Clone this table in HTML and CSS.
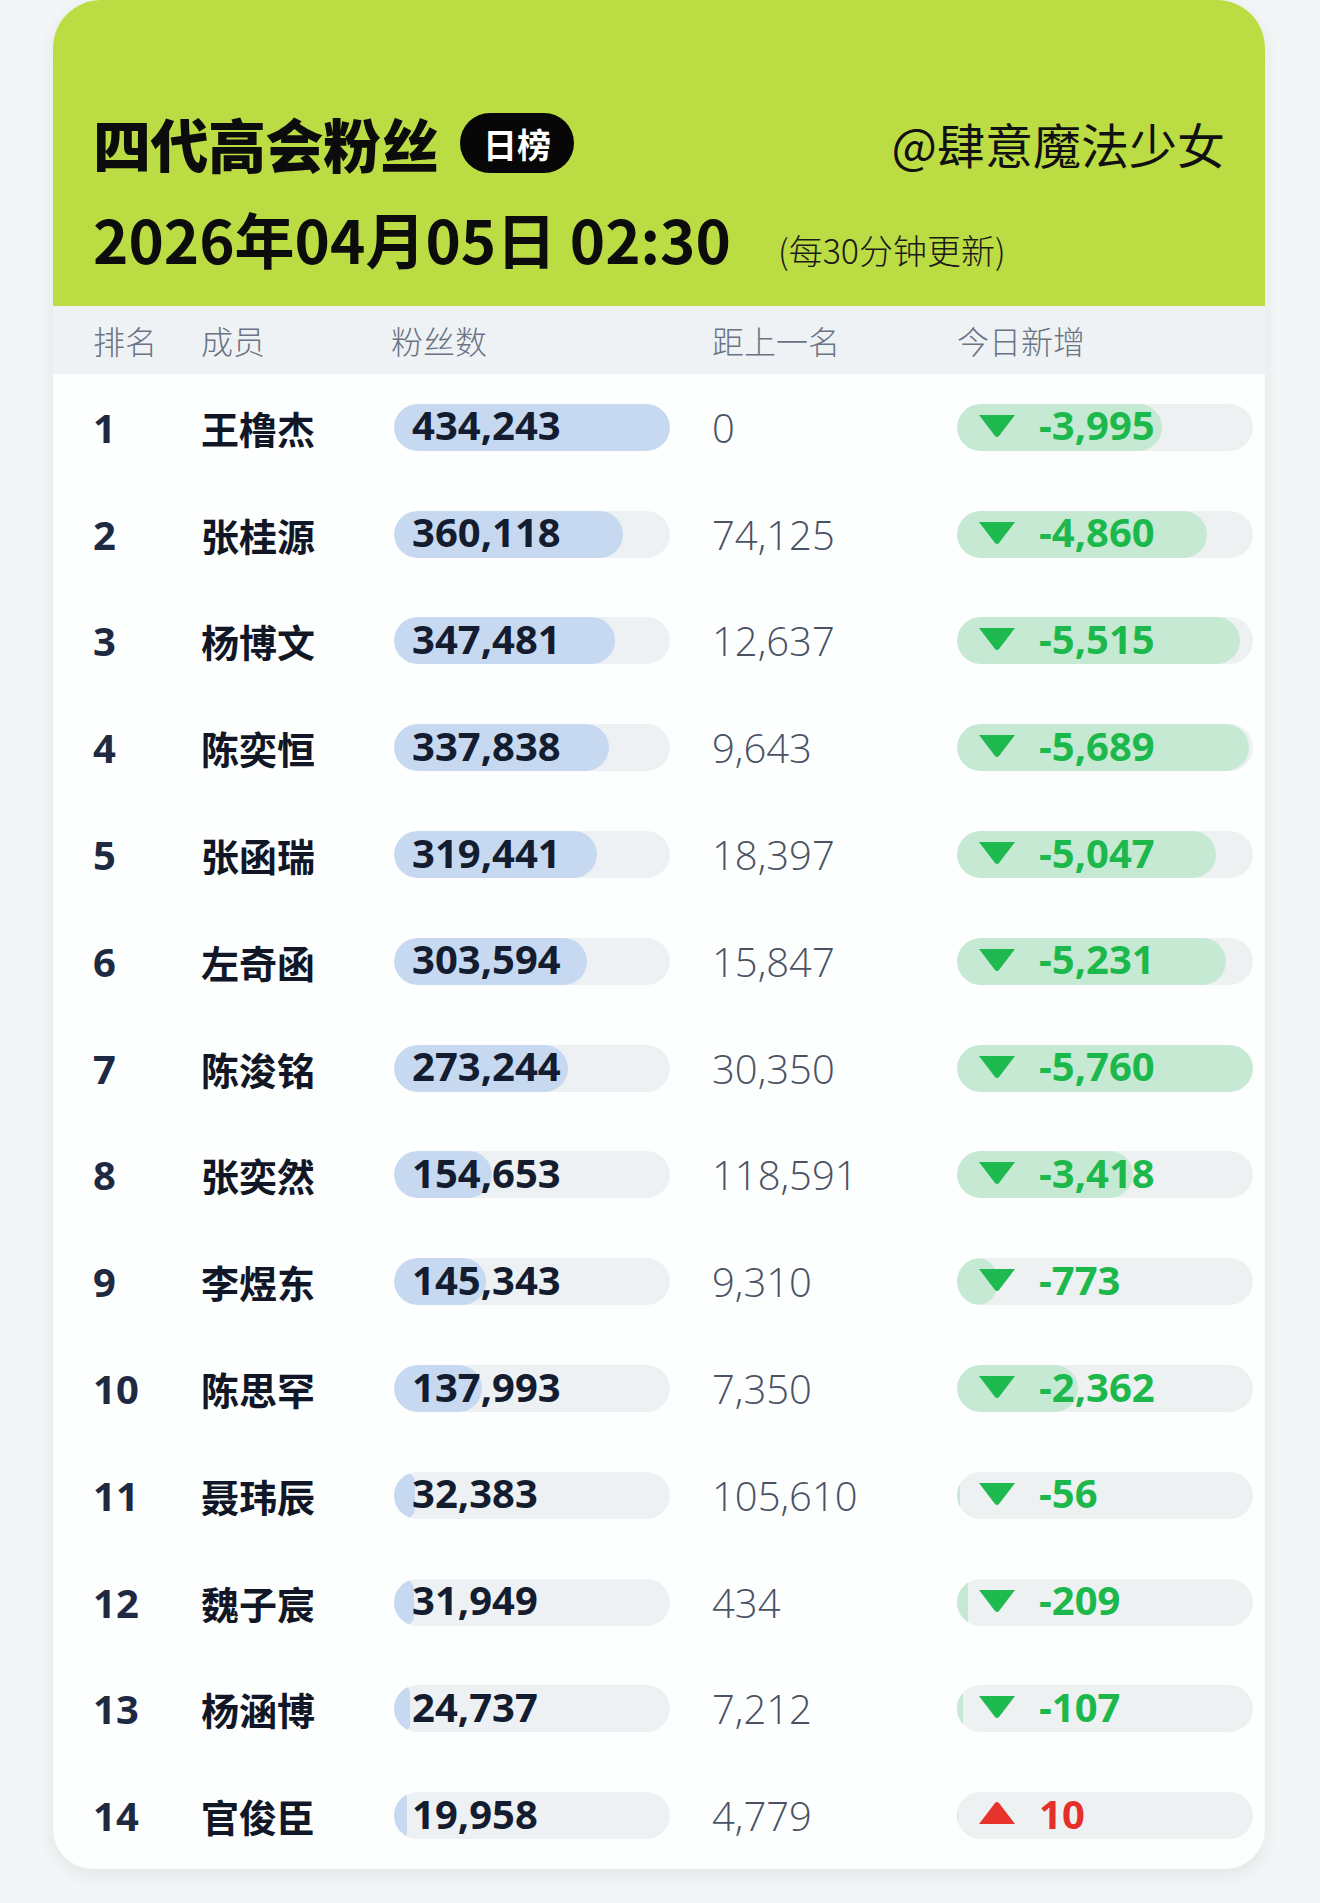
FILE: index.html
```html
<!DOCTYPE html>
<html lang="zh-CN">
<head>
<meta charset="utf-8">
<title>四代高会粉丝 日榜</title>
<link rel="stylesheet" href="styles.css">
</head>
<body>
<div class="card">
  <header class="head">
    <div class="title-row">
      <h1 class="title">四代高会粉丝</h1>
      <span class="badge">日榜</span>
      <span class="handle">@肆意魔法少女</span>
    </div>
    <div class="date-row">
      <span class="date">2026年04月05日 02:30</span>
      <span class="note">(每30分钟更新)</span>
    </div>
  </header>
  <div class="cols">
    <span>排名</span><span>成员</span><span>粉丝数</span><span>距上一名</span><span>今日新增</span>
  </div>
  <div class="rows">
    <div class="row"><span class="rank">1</span><span class="name">王橹杰</span><div class="bar"><div class="track"><div class="fill" style="width:100%"></div></div><span class="val">434,243</span></div><span class="gap">0</span><div class="delta"><div class="track dtrack"><div class="dfill" style="width:69.36%"></div></div><svg class="tri" viewBox="0 0 42 25"><path d="M3 2 H39 L23 23 Q21 25 19 23 Z" fill="#1fba4f"/></svg><span class="dval">-3,995</span></div></div>
    <div class="row"><span class="rank">2</span><span class="name">张桂源</span><div class="bar"><div class="track"><div class="fill" style="width:82.93%"></div></div><span class="val">360,118</span></div><span class="gap">74,125</span><div class="delta"><div class="track dtrack"><div class="dfill" style="width:84.38%"></div></div><svg class="tri" viewBox="0 0 42 25"><path d="M3 2 H39 L23 23 Q21 25 19 23 Z" fill="#1fba4f"/></svg><span class="dval">-4,860</span></div></div>
    <div class="row"><span class="rank">3</span><span class="name">杨博文</span><div class="bar"><div class="track"><div class="fill" style="width:80.02%"></div></div><span class="val">347,481</span></div><span class="gap">12,637</span><div class="delta"><div class="track dtrack"><div class="dfill" style="width:95.75%"></div></div><svg class="tri" viewBox="0 0 42 25"><path d="M3 2 H39 L23 23 Q21 25 19 23 Z" fill="#1fba4f"/></svg><span class="dval">-5,515</span></div></div>
    <div class="row"><span class="rank">4</span><span class="name">陈奕恒</span><div class="bar"><div class="track"><div class="fill" style="width:77.80%"></div></div><span class="val">337,838</span></div><span class="gap">9,643</span><div class="delta"><div class="track dtrack"><div class="dfill" style="width:98.77%"></div></div><svg class="tri" viewBox="0 0 42 25"><path d="M3 2 H39 L23 23 Q21 25 19 23 Z" fill="#1fba4f"/></svg><span class="dval">-5,689</span></div></div>
    <div class="row"><span class="rank">5</span><span class="name">张函瑞</span><div class="bar"><div class="track"><div class="fill" style="width:73.56%"></div></div><span class="val">319,441</span></div><span class="gap">18,397</span><div class="delta"><div class="track dtrack"><div class="dfill" style="width:87.62%"></div></div><svg class="tri" viewBox="0 0 42 25"><path d="M3 2 H39 L23 23 Q21 25 19 23 Z" fill="#1fba4f"/></svg><span class="dval">-5,047</span></div></div>
    <div class="row"><span class="rank">6</span><span class="name">左奇函</span><div class="bar"><div class="track"><div class="fill" style="width:69.91%"></div></div><span class="val">303,594</span></div><span class="gap">15,847</span><div class="delta"><div class="track dtrack"><div class="dfill" style="width:90.82%"></div></div><svg class="tri" viewBox="0 0 42 25"><path d="M3 2 H39 L23 23 Q21 25 19 23 Z" fill="#1fba4f"/></svg><span class="dval">-5,231</span></div></div>
    <div class="row"><span class="rank">7</span><span class="name">陈浚铭</span><div class="bar"><div class="track"><div class="fill" style="width:62.92%"></div></div><span class="val">273,244</span></div><span class="gap">30,350</span><div class="delta"><div class="track dtrack"><div class="dfill" style="width:100%"></div></div><svg class="tri" viewBox="0 0 42 25"><path d="M3 2 H39 L23 23 Q21 25 19 23 Z" fill="#1fba4f"/></svg><span class="dval">-5,760</span></div></div>
    <div class="row"><span class="rank">8</span><span class="name">张奕然</span><div class="bar"><div class="track"><div class="fill" style="width:35.61%"></div></div><span class="val">154,653</span></div><span class="gap">118,591</span><div class="delta"><div class="track dtrack"><div class="dfill" style="width:59.34%"></div></div><svg class="tri" viewBox="0 0 42 25"><path d="M3 2 H39 L23 23 Q21 25 19 23 Z" fill="#1fba4f"/></svg><span class="dval">-3,418</span></div></div>
    <div class="row"><span class="rank">9</span><span class="name">李煜东</span><div class="bar"><div class="track"><div class="fill" style="width:33.47%"></div></div><span class="val">145,343</span></div><span class="gap">9,310</span><div class="delta"><div class="track dtrack"><div class="dfill" style="width:13.42%"></div></div><svg class="tri" viewBox="0 0 42 25"><path d="M3 2 H39 L23 23 Q21 25 19 23 Z" fill="#1fba4f"/></svg><span class="dval">-773</span></div></div>
    <div class="row"><span class="rank">10</span><span class="name">陈思罕</span><div class="bar"><div class="track"><div class="fill" style="width:31.78%"></div></div><span class="val">137,993</span></div><span class="gap">7,350</span><div class="delta"><div class="track dtrack"><div class="dfill" style="width:41.01%"></div></div><svg class="tri" viewBox="0 0 42 25"><path d="M3 2 H39 L23 23 Q21 25 19 23 Z" fill="#1fba4f"/></svg><span class="dval">-2,362</span></div></div>
    <div class="row"><span class="rank">11</span><span class="name">聂玮辰</span><div class="bar"><div class="track"><div class="fill" style="width:7.46%"></div></div><span class="val">32,383</span></div><span class="gap">105,610</span><div class="delta"><div class="track dtrack"><div class="dfill" style="width:0.97%"></div></div><svg class="tri" viewBox="0 0 42 25"><path d="M3 2 H39 L23 23 Q21 25 19 23 Z" fill="#1fba4f"/></svg><span class="dval">-56</span></div></div>
    <div class="row"><span class="rank">12</span><span class="name">魏子宸</span><div class="bar"><div class="track"><div class="fill" style="width:7.36%"></div></div><span class="val">31,949</span></div><span class="gap">434</span><div class="delta"><div class="track dtrack"><div class="dfill" style="width:3.63%"></div></div><svg class="tri" viewBox="0 0 42 25"><path d="M3 2 H39 L23 23 Q21 25 19 23 Z" fill="#1fba4f"/></svg><span class="dval">-209</span></div></div>
    <div class="row"><span class="rank">13</span><span class="name">杨涵博</span><div class="bar"><div class="track"><div class="fill" style="width:5.70%"></div></div><span class="val">24,737</span></div><span class="gap">7,212</span><div class="delta"><div class="track dtrack"><div class="dfill" style="width:1.86%"></div></div><svg class="tri" viewBox="0 0 42 25"><path d="M3 2 H39 L23 23 Q21 25 19 23 Z" fill="#1fba4f"/></svg><span class="dval">-107</span></div></div>
    <div class="row"><span class="rank">14</span><span class="name">官俊臣</span><div class="bar"><div class="track"><div class="fill" style="width:4.60%"></div></div><span class="val">19,958</span></div><span class="gap">4,779</span><div class="delta"><div class="track dtrack"><div class="dfill" style="width:0.17%"></div></div><svg class="tri" viewBox="0 0 42 25"><path d="M3 23 H39 L23 2 Q21 0 19 2 Z" fill="#e8332c"/></svg><span class="dval up">10</span></div></div>
  </div>
</div>
</body>
</html>
```
FILE: styles.css
```css
html, body {
  margin: 0;
  padding: 0;
}
body {
  background: #f3f5f6;
  font-family: "Noto Sans CJK SC", "Noto Sans", sans-serif;
  width: 1320px;
  height: 1903px;
  overflow: hidden;
}
.card {
  margin-left: 53px;
  width: 1212px;
  background: #fdfefe;
  border-radius: 48px 48px 40px 40px;
  box-shadow: 0 6px 18px rgba(40, 60, 70, 0.08);
  overflow: hidden;
}
.head {
  background: #bcdc44;
  height: 306px;
  box-sizing: border-box;
  padding: 113px 40px 0 40px;
}
.title-row {
  display: flex;
  align-items: center;
  height: 60px;
}
.title {
  margin: 0;
  font-size: 58px;
  font-weight: 900;
  line-height: 60px;
  color: #0c0c0c;
  letter-spacing: -0.5px;
}
.badge {
  margin-left: 22px;
  width: 114px;
  height: 60px;
  border-radius: 30px;
  background: #070707;
  color: #fff;
  font-size: 34px;
  font-weight: 700;
  display: flex;
  align-items: center;
  justify-content: center;
}
.handle {
  margin-left: auto;
  font-size: 48px;
  font-weight: 400;
  color: #111;
  line-height: 60px;
}
.date-row {
  display: flex;
  align-items: baseline;
  margin-top: 34px;
}
.date {
  font-size: 60px;
  font-weight: 700;
  line-height: 62px;
  color: #0c0c0c;
}
.note {
  margin-left: 47px;
  font-size: 34px;
  font-weight: 300;
  color: #1a1a1a;
}
.cols,
.row {
  display: grid;
  grid-template-columns: 108px 190px 321px 245px 1fr;
  padding-left: 40px;
  padding-right: 12px;
  align-items: center;
}
.cols {
  height: 68px;
  background: #eef2f4;
  font-size: 32px;
  font-weight: 300;
  color: #6a7384;
}
.row {
  height: 106.8px;
}
.rank {
  font-family: "Noto Sans", "Noto Sans CJK SC", sans-serif;
  font-size: 40px;
  font-weight: 700;
  color: #1e2942;
}
.name {
  font-size: 38px;
  font-weight: 700;
  color: #111726;
}
.bar {
  position: relative;
  margin-left: 3px;
  width: 276px;
  height: 47px;
  display: flex;
  align-items: center;
}
.track {
  position: absolute;
  inset: 0;
  border-radius: 24px;
  background: #eef1f3;
  overflow: hidden;
}
.dtrack {
  background: #eef1f2;
}
.fill,
.dfill {
  height: 100%;
  border-radius: 24px;
  background: #c7d9f1;
}
.dfill {
  background: #c6e9d4;
}
.val {
  position: relative;
  top: -2px;
  padding-left: 18px;
  font-family: "Noto Sans", "Noto Sans CJK SC", sans-serif;
  font-size: 40px;
  font-weight: 700;
  color: #141c2f;
  line-height: 40px;
}
.gap {
  font-family: "Open Sans", "Noto Sans", sans-serif;
  font-size: 40px;
  font-weight: 300;
  color: #4a5264;
}
.delta {
  position: relative;
  width: 296px;
  height: 47px;
  display: flex;
  align-items: center;
}
.tri {
  position: relative;
  top: -2px;
  margin-left: 19px;
  width: 42px;
  height: 25px;
}
.dval {
  position: relative;
  top: -2px;
  margin-left: 21px;
  font-family: "Noto Sans", "Noto Sans CJK SC", sans-serif;
  font-size: 40px;
  font-weight: 700;
  color: #1cb84c;
  line-height: 40px;
}
.dval.up {
  color: #e5302a;
}
```
